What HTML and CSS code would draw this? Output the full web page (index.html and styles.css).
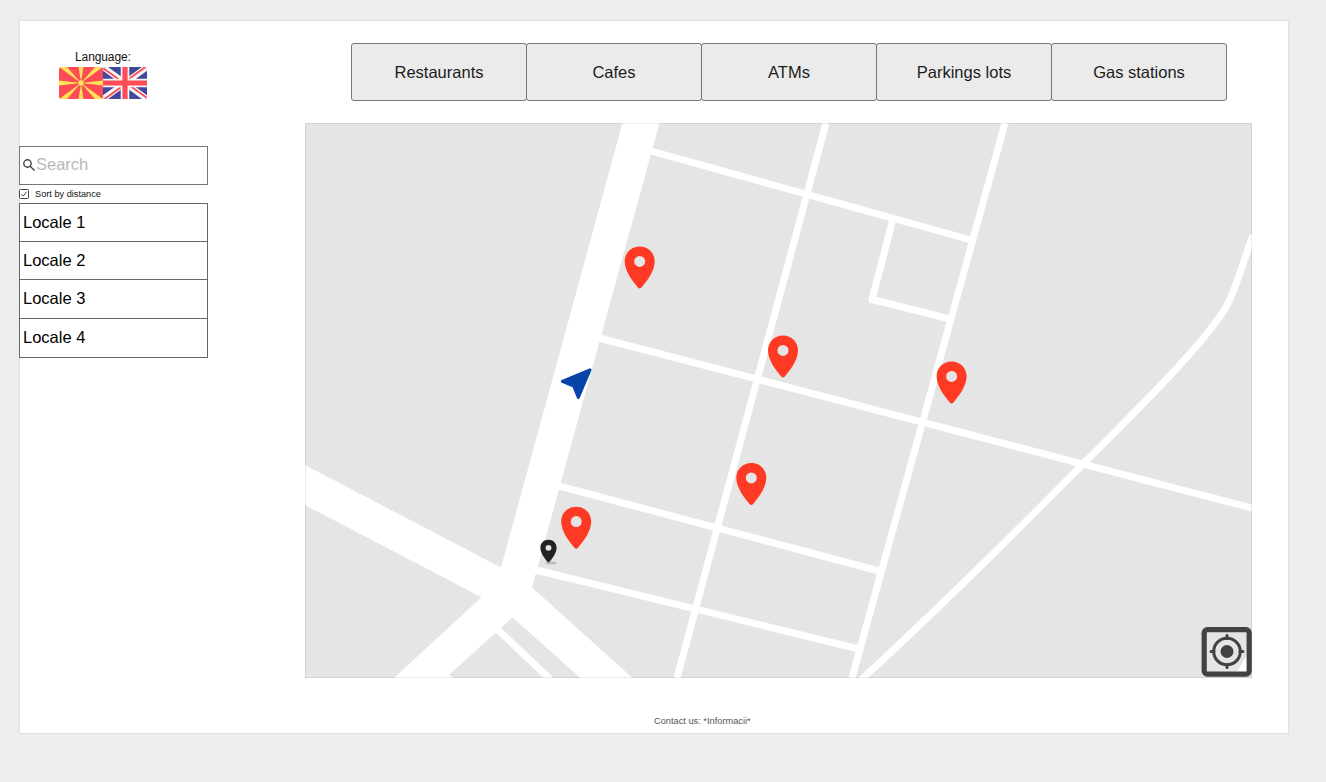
FILE: index.html
```html
<!DOCTYPE html>
<html lang="en">
<head>
<meta charset="utf-8">
<title>Locale finder</title>
<link rel="stylesheet" href="styles.css">
</head>
<body>
<div class="frame">
  <div class="columns">
    <aside class="sidebar">
      <div class="language">
        <span class="language-label">Language:</span>
        <div class="flags">
          <svg class="flag" viewBox="0 0 44 32">
            <clipPath id="round"><rect width="44" height="32" rx="2.5"/></clipPath>
            <g clip-path="url(#round)">
              <rect width="44" height="32" fill="#ff4b55"/>
              <path fill="#ffe15a" d="M0 0h8L22 16zM44 0h-8L22 16zM0 32h8L22 16zM44 32h-8L22 16zM19.600 0h4.800L22 16zM19.600 32h4.800L22 16zM0 13.600v4.800L22 16zM44 13.600v4.800L22 16z"/>
              <circle cx="22" cy="16" r="3.400" fill="#ffe15a" stroke="#ff4b55" stroke-width=".8"/>
            </g>
          </svg>
          <svg class="flag" viewBox="0 0 44 32">
            <g clip-path="url(#round)">
              <rect width="44" height="32" fill="#41479b"/>
              <path stroke="#f5f5f5" stroke-width="6" d="M0 0l44 32M44 0L0 32"/>
              <path stroke="#ff4b55" stroke-width="1.900" d="M0 1.200L17 13.300M42.500 0L24 13.200M1.500 32L20 18.800M44 30.800L27 18.700"/>
              <path stroke="#f5f5f5" stroke-width="8.600" d="M22 0v32M0 16h44"/>
              <path stroke="#ff4b55" stroke-width="5.200" d="M22 0v32M0 16h44"/>
            </g>
          </svg>
        </div>
      </div>
      <div class="search">
        <svg class="search-icon" viewBox="0 0 12 12"><circle cx="4.500" cy="4.500" r="3.700"/><path d="M7.200 7.200l4.400 4.400"/></svg>
        <span>Search</span>
      </div>
      <div class="sort">
        <svg class="check" viewBox="0 0 10 10"><rect x=".5" y=".5" width="9" height="9" rx="1"/><path d="M2.400 5.200l1.800 1.900 3.400-4.300"/></svg>
        <span>Sort by distance</span>
      </div>
      <ul class="locales">
        <li>Locale 1</li>
        <li>Locale 2</li>
        <li>Locale 3</li>
        <li>Locale 4</li>
      </ul>
    </aside>
    <main class="main">
      <nav class="tabs">
        <div class="tab">Restaurants</div>
        <div class="tab">Cafes</div>
        <div class="tab">ATMs</div>
        <div class="tab">Parkings lots</div>
        <div class="tab">Gas stations</div>
      </nav>
      <svg class="map" viewBox="305 123 947 555">
        <defs>
          <path id="pin" fill-rule="evenodd" d="M0 -42C-8.600 -42-15-35.500-15-27.200C-15-17-6.500-6.500-1.600-.8Q0 .8 1.600-.8C6.500-6.500 15-17 15-27.200C15-35.500 8.600-42 0-42zM0-32.600a5.500 5.500 0 1 1 0 11a5.500 5.500 0 1 1 0-11z"/>
        </defs>
        <rect x="305" y="123" width="947" height="555" fill="#e5e5e5"/>
        <path fill="#fff" d="M622.500 123H659.500L532 587.500L632.500 678H580.500L512.300 617.300L449.500 674.500L453 678H394L481.500 597.300L305 505V465L501 567.500z"/>
        <g class="roads">
          <path d="M651 151L971 240"/>
          <path d="M826 123L677 678"/>
          <path d="M1005 123L852 678"/>
          <path d="M893 219L872 299.500L950 319"/>
          <path d="M599 338L1252 508"/>
          <path d="M559 486L879 571"/>
          <path d="M536 570L859 649"/>
          <path d="M497 629L550 679"/>
          <path d="M861 680C925 621 1010 538 1083 464C1140 407 1193 355 1221 315C1233 298 1240 272 1253 235"/>
        </g>
        <rect x="305.500" y="123.500" width="946" height="554" fill="none" stroke="#000" stroke-opacity=".07"/>
        <g fill="#ff3a24">
          <use href="#pin" x="639.700" y="288.500"/>
          <use href="#pin" x="783" y="377.500"/>
          <use href="#pin" x="951.600" y="403.500"/>
          <use href="#pin" x="751.300" y="505"/>
          <use href="#pin" x="576.200" y="548.700"/>
        </g>
        <ellipse cx="551" cy="563" rx="6" ry="1.600" fill="#bdbdbd"/>
        <use href="#pin" fill="#222" transform="translate(548.500 562.500) scale(.54)"/>
        <path fill="#0644a8" stroke="#0644a8" stroke-width="3" stroke-linejoin="round" d="M590 369.800L562.300 381.400L573.800 386.200L578.300 397.500z"/>
        <g>
          <path fill="#fff" d="M1247 655V672H1237z"/>
          <rect x="1204.200" y="629.700" width="45" height="44.500" rx="3.200" fill="none" stroke="#424242" stroke-width="5.200"/>
          <g fill="none" stroke="#424242" stroke-width="3" stroke-linecap="round">
            <circle cx="1227" cy="651.500" r="13.300"/>
            <path d="M1227 635.500v3M1227 664.500v3M1211 651.500h3M1240 651.500h3"/>
          </g>
          <circle cx="1227" cy="651.500" r="6.500" fill="#424242"/>
        </g>
      </svg>
    </main>
  </div>
  <footer class="footer">Contact us: *Informacii*</footer>
</div>
</body>
</html>
```
FILE: styles.css
```css
* { box-sizing: border-box; }
body {
  margin: 0;
  padding: 20px 37px 48px 19px;
  height: 782px;
  background: #ededed;
  font-family: "Liberation Sans", Arial, sans-serif;
  font-size: 16.5px;
  color: #000;
}
.frame {
  display: flex;
  flex-direction: column;
  height: 714px;
  background: #fff;
  box-shadow: inset 0 0 0 1px #e0e0e0;
}
.columns { display: flex; justify-content: space-between; padding-right: 37px; }
.sidebar { width: 189px; padding-top: 29px; }
.language {
  display: flex;
  flex-direction: column;
  width: 88px;
  height: 97px;
  margin-left: 40px;
}
.language-label {
  padding: 0 0 2px 16px;
  font-size: 12px;
  line-height: 16px;
  letter-spacing: -.1px;
  color: #111;
}
.flags { display: flex; }
.flag { width: 44px; height: 32px; }
.search {
  display: flex;
  align-items: center;
  gap: 1px;
  height: 39px;
  padding: 0 0 3px 3px;
  border: 1px solid #777;
  color: #b8b8b8;
}
.search-icon { width: 12px; height: 12px; margin-top: 2px; fill: none; stroke: #444; stroke-width: 1.4; }
.sort {
  display: flex;
  align-items: center;
  gap: 6px;
  height: 18px;
  padding-bottom: 1px;
  font-size: 9.2px;
  color: #111;
}
.check { width: 10px; height: 10px; fill: none; stroke: #444; stroke-width: 1; }
.locales {
  display: grid;
  grid-template-rows: 38px 38px 39px 39px;
  margin: 0;
  padding: 0;
  border-top: 1px solid #666;
  list-style: none;
}
.locales li {
  display: flex;
  align-items: center;
  padding: 0 0 1px 3px;
  border: 1px solid #666;
  border-top: 0;
}
.main { width: 947px; padding-top: 23px; }
.tabs { display: flex; height: 58px; margin: 0 25px 22px 46px; }
.tab {
  display: flex;
  flex: 1;
  align-items: center;
  justify-content: center;
  border: 1px solid #777;
  border-radius: 3px;
  background: #ebebeb;
  color: #1c1c1c;
}
.tab + .tab { margin-left: -1px; }
.map { display: block; width: 947px; height: 555px; }
.roads { fill: none; stroke: #fff; stroke-width: 7; stroke-linejoin: round; }
.footer { padding: 37px 0 0 635px; font-size: 9.25px; line-height: 12px; color: #555; }
```
